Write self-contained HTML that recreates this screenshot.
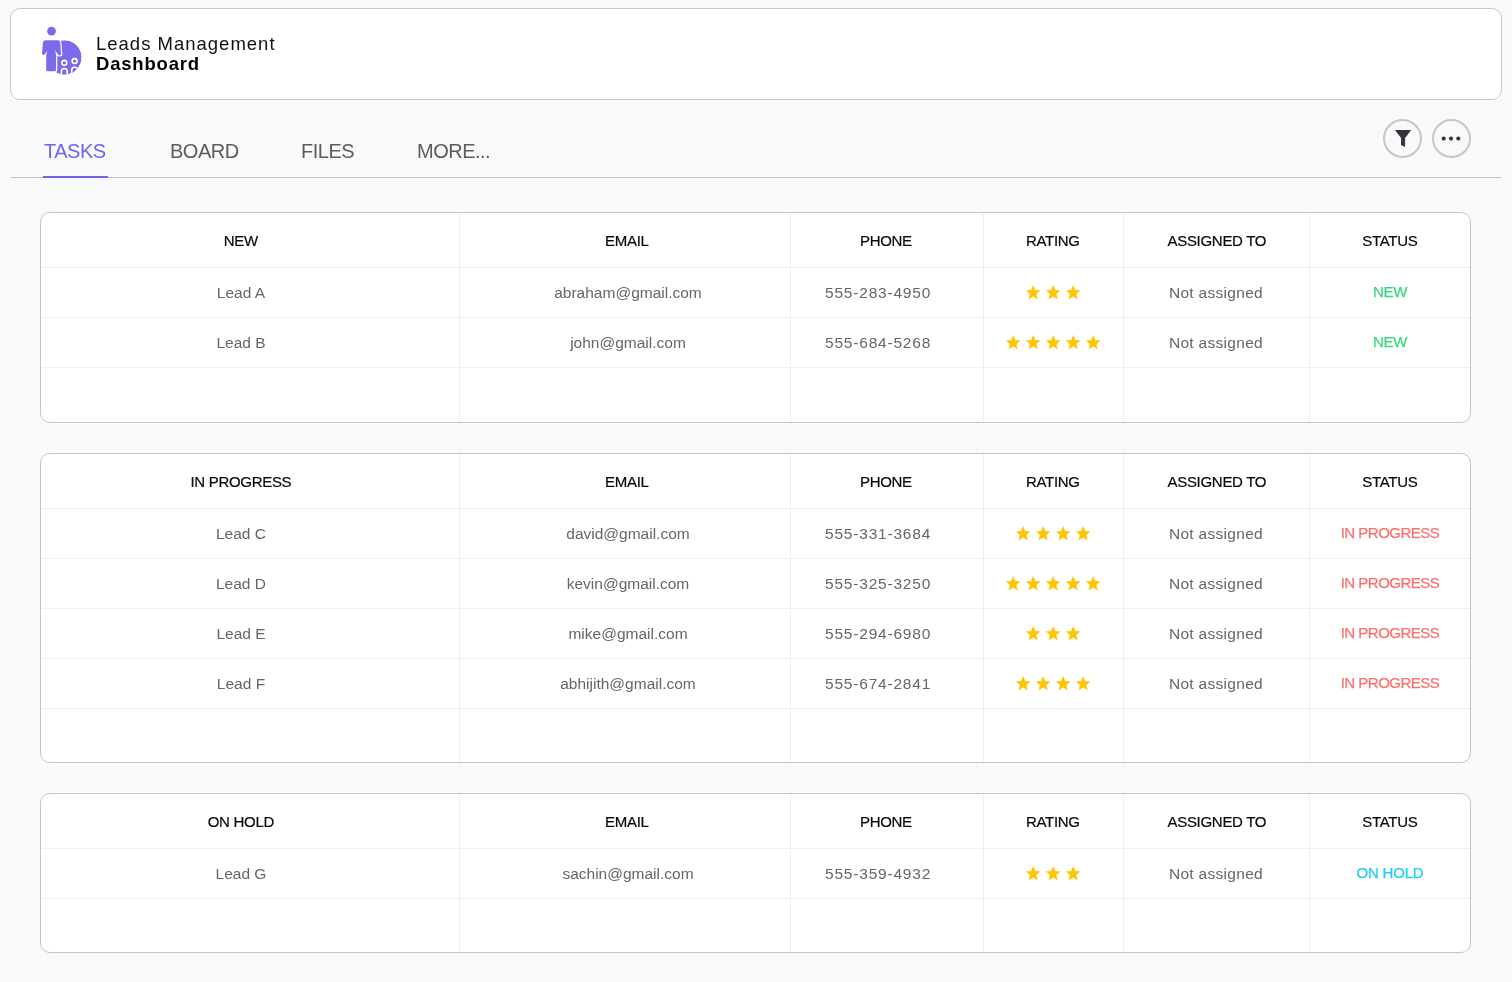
<!DOCTYPE html>
<html><head><meta charset="utf-8">
<style>
*{box-sizing:border-box;margin:0;padding:0}
html,body{width:1512px;height:982px;overflow:hidden;background:#f8f9fa;font-family:"Liberation Sans",sans-serif;position:relative}
.hdr{position:absolute;left:10px;top:8px;width:1492px;height:92px;background:#fff;border:1px solid #c9c9c9;border-radius:10px}
.logo{position:absolute;left:38px;top:24px}
.t1{position:absolute;left:96px;top:34.3px;font-size:18.5px;letter-spacing:1.0px;line-height:20px;color:#111;white-space:nowrap}
.t2{position:absolute;left:96px;top:54px;font-size:18.5px;letter-spacing:0.8px;font-weight:700;line-height:20px;color:#000;white-space:nowrap}
.tab{position:absolute;top:139px;font-size:20px;letter-spacing:-0.5px;color:#5c5c5c;line-height:24px;white-space:nowrap}
.tab.act{color:#7262ee}
.uline{position:absolute;left:43px;top:176px;width:65px;height:2px;background:#7262ee}
.gline{position:absolute;left:11px;top:177px;width:1490px;height:1px;background:#c4c4c4}
.cbtn{position:absolute;top:119px;width:39px;height:39px;border:2px solid #c6c6c6;border-radius:50%}
.ico{position:absolute;left:0;top:0}
.tbl{position:absolute;left:40px;width:1431px;background:#fff;border:1px solid #c6c6c6;border-radius:10px}
.vl{position:absolute;top:0;bottom:0;width:1px;background:#eeeeee}
.hl{position:absolute;left:0;right:0;height:1px;background:#eeeeee}
.th,.td,.tab,.t1,.t2{will-change:transform}
.th,.td{position:absolute;width:400px;text-align:center;white-space:nowrap}
.th{margin-top:0.7px;font-size:15px;letter-spacing:-0.3px;color:#080808;-webkit-text-stroke:0.2px #080808;text-indent:-0.3px}
.td{font-size:15.5px;color:#666}
.td.ph{letter-spacing:0.8px;text-align:left;width:auto}
.td.na{letter-spacing:0.3px}
.st{position:absolute;fill:#ffc400;overflow:visible}
.s{margin-top:-0.7px;margin-left:-0.8px;font-size:15px;-webkit-text-stroke:0.25px currentColor}
.s.new{color:#3bd77c;letter-spacing:-0.4px}
.s.prog{color:#f87171;letter-spacing:-0.5px}
.s.hold{color:#22d0ee;letter-spacing:-0.2px}
</style></head><body>
<div class="hdr"></div>
<svg class="logo" viewBox="38 24 48 54" width="48" height="54">
<defs><clipPath id="cc"><circle cx="64.4" cy="57.4" r="17.2"/></clipPath></defs>
<circle cx="51.5" cy="31.1" r="4.4" fill="#7b6bea"/>
<g clip-path="url(#cc)">
<circle cx="64.4" cy="57.4" r="17.2" fill="#7b6bea"/>
<circle cx="64.3" cy="62.8" r="2.45" fill="#7b6bea" stroke="#fff" stroke-width="1.6"/>
<circle cx="74.6" cy="61.1" r="2.45" fill="#7b6bea" stroke="#fff" stroke-width="1.6"/>
<path d="M61.4 78 V71.4 A2.9 2.9 0 0 1 67.2 71.4 V78" fill="#7b6bea" stroke="#fff" stroke-width="1.6"/>
<path d="M71.7 78 V70.2 A2.9 2.9 0 0 1 77.5 70.2 V78" fill="#7b6bea" stroke="#fff" stroke-width="1.6"/>
</g>
<path d="M45.6 40.2 H57.7 Q60 40.2 60.2 42.6 L61.1 54 Q61.2 55.3 60 55.3 L59 55.3 Q58.2 55.3 57.9 54.6 L55.2 50.4 L56.1 55.5 V69.8 Q56.1 71.3 54.6 71.3 H47.7 Q46.2 71.3 46.2 69.8 V55.5 L47.1 50.4 L45.1 54.1 Q44.7 54.8 43.8 54.8 H42.9 Q41.9 54.8 42 53.7 L42.9 42.6 Q43.2 40.2 45.6 40.2 Z" fill="#7b6bea" stroke="#fff" stroke-width="2.4" paint-order="stroke" stroke-linejoin="round"/>
</svg>
<div class="t1">Leads Management</div>
<div class="t2">Dashboard</div>
<div class="tab act" style="left:43.5px">TASKS</div>
<div class="tab" style="left:169.5px">BOARD</div>
<div class="tab" style="left:300.5px">FILES</div>
<div class="tab" style="left:417px">MORE...</div>
<div class="gline"></div>
<div class="uline"></div>
<div class="cbtn" style="left:1383px"></div>
<div class="cbtn" style="left:1432px"></div>
<svg class="ico" width="1512" height="180" viewBox="0 0 1512 180">
<path d="M1395 130 H1411.2 L1405.1 137.9 V146.9 L1401 144.9 V137.9 Z" fill="#36363a"/>
<circle cx="1443.7" cy="138.6" r="2.05" fill="#36363a"/>
<circle cx="1451" cy="138.6" r="2.05" fill="#36363a"/>
<circle cx="1458.3" cy="138.6" r="2.05" fill="#36363a"/>
</svg>
<div class="tbl" style="top:212px;height:211px">
<div class="vl" style="left:418px"></div>
<div class="vl" style="left:749px"></div>
<div class="vl" style="left:942px"></div>
<div class="vl" style="left:1082px"></div>
<div class="vl" style="left:1268px"></div>
<div class="hl" style="top:54px"></div>
<div class="hl" style="top:104px"></div>
<div class="hl" style="top:154px"></div>
</div>
<div class="th" style="left:40.50px;top:213px;height:54px;line-height:54px">NEW</div>
<div class="th" style="left:427.00px;top:213px;height:54px;line-height:54px">EMAIL</div>
<div class="th" style="left:686.00px;top:213px;height:54px;line-height:54px">PHONE</div>
<div class="th" style="left:852.50px;top:213px;height:54px;line-height:54px">RATING</div>
<div class="th" style="left:1016.50px;top:213px;height:54px;line-height:54px">ASSIGNED TO</div>
<div class="th" style="left:1190.00px;top:213px;height:54px;line-height:54px">STATUS</div>
<div class="td" style="left:41.00px;top:268px;height:49px;line-height:49px">Lead A</div>
<div class="td" style="left:427.50px;top:268px;height:49px;line-height:49px">abraham@gmail.com</div>
<div class="td ph" style="left:825px;top:268px;height:49px;line-height:49px">555-283-4950</div>
<svg class="st" style="left:1024.84px;top:284.02px;width:16.32px;height:17.18px" viewBox="0 0 24 24" preserveAspectRatio="none"><path d="M12 17.27L18.18 21l-1.64-7.03L22 9.24l-7.19-.61L12 2 9.19 8.63 2 9.24l5.46 4.73L5.82 21z" stroke="#ffc400" stroke-width="0.6" stroke-linejoin="round"/></svg><svg class="st" style="left:1044.84px;top:284.02px;width:16.32px;height:17.18px" viewBox="0 0 24 24" preserveAspectRatio="none"><path d="M12 17.27L18.18 21l-1.64-7.03L22 9.24l-7.19-.61L12 2 9.19 8.63 2 9.24l5.46 4.73L5.82 21z" stroke="#ffc400" stroke-width="0.6" stroke-linejoin="round"/></svg><svg class="st" style="left:1064.84px;top:284.02px;width:16.32px;height:17.18px" viewBox="0 0 24 24" preserveAspectRatio="none"><path d="M12 17.27L18.18 21l-1.64-7.03L22 9.24l-7.19-.61L12 2 9.19 8.63 2 9.24l5.46 4.73L5.82 21z" stroke="#ffc400" stroke-width="0.6" stroke-linejoin="round"/></svg>
<div class="td na" style="left:1015.70px;top:268px;height:49px;line-height:49px">Not assigned</div>
<div class="td s new" style="left:1190.40px;top:268px;height:49px;line-height:49px">NEW</div>
<div class="td" style="left:41.00px;top:318px;height:49px;line-height:49px">Lead B</div>
<div class="td" style="left:427.50px;top:318px;height:49px;line-height:49px">john@gmail.com</div>
<div class="td ph" style="left:825px;top:318px;height:49px;line-height:49px">555-684-5268</div>
<svg class="st" style="left:1004.84px;top:334.02px;width:16.32px;height:17.18px" viewBox="0 0 24 24" preserveAspectRatio="none"><path d="M12 17.27L18.18 21l-1.64-7.03L22 9.24l-7.19-.61L12 2 9.19 8.63 2 9.24l5.46 4.73L5.82 21z" stroke="#ffc400" stroke-width="0.6" stroke-linejoin="round"/></svg><svg class="st" style="left:1024.84px;top:334.02px;width:16.32px;height:17.18px" viewBox="0 0 24 24" preserveAspectRatio="none"><path d="M12 17.27L18.18 21l-1.64-7.03L22 9.24l-7.19-.61L12 2 9.19 8.63 2 9.24l5.46 4.73L5.82 21z" stroke="#ffc400" stroke-width="0.6" stroke-linejoin="round"/></svg><svg class="st" style="left:1044.84px;top:334.02px;width:16.32px;height:17.18px" viewBox="0 0 24 24" preserveAspectRatio="none"><path d="M12 17.27L18.18 21l-1.64-7.03L22 9.24l-7.19-.61L12 2 9.19 8.63 2 9.24l5.46 4.73L5.82 21z" stroke="#ffc400" stroke-width="0.6" stroke-linejoin="round"/></svg><svg class="st" style="left:1064.84px;top:334.02px;width:16.32px;height:17.18px" viewBox="0 0 24 24" preserveAspectRatio="none"><path d="M12 17.27L18.18 21l-1.64-7.03L22 9.24l-7.19-.61L12 2 9.19 8.63 2 9.24l5.46 4.73L5.82 21z" stroke="#ffc400" stroke-width="0.6" stroke-linejoin="round"/></svg><svg class="st" style="left:1084.84px;top:334.02px;width:16.32px;height:17.18px" viewBox="0 0 24 24" preserveAspectRatio="none"><path d="M12 17.27L18.18 21l-1.64-7.03L22 9.24l-7.19-.61L12 2 9.19 8.63 2 9.24l5.46 4.73L5.82 21z" stroke="#ffc400" stroke-width="0.6" stroke-linejoin="round"/></svg>
<div class="td na" style="left:1015.70px;top:318px;height:49px;line-height:49px">Not assigned</div>
<div class="td s new" style="left:1190.40px;top:318px;height:49px;line-height:49px">NEW</div>
<div class="tbl" style="top:453px;height:310px">
<div class="vl" style="left:418px"></div>
<div class="vl" style="left:749px"></div>
<div class="vl" style="left:942px"></div>
<div class="vl" style="left:1082px"></div>
<div class="vl" style="left:1268px"></div>
<div class="hl" style="top:54px"></div>
<div class="hl" style="top:104px"></div>
<div class="hl" style="top:154px"></div>
<div class="hl" style="top:204px"></div>
<div class="hl" style="top:254px"></div>
</div>
<div class="th" style="left:40.50px;top:454px;height:54px;line-height:54px">IN PROGRESS</div>
<div class="th" style="left:427.00px;top:454px;height:54px;line-height:54px">EMAIL</div>
<div class="th" style="left:686.00px;top:454px;height:54px;line-height:54px">PHONE</div>
<div class="th" style="left:852.50px;top:454px;height:54px;line-height:54px">RATING</div>
<div class="th" style="left:1016.50px;top:454px;height:54px;line-height:54px">ASSIGNED TO</div>
<div class="th" style="left:1190.00px;top:454px;height:54px;line-height:54px">STATUS</div>
<div class="td" style="left:41.00px;top:509px;height:49px;line-height:49px">Lead C</div>
<div class="td" style="left:427.50px;top:509px;height:49px;line-height:49px">david@gmail.com</div>
<div class="td ph" style="left:825px;top:509px;height:49px;line-height:49px">555-331-3684</div>
<svg class="st" style="left:1014.84px;top:525.02px;width:16.32px;height:17.18px" viewBox="0 0 24 24" preserveAspectRatio="none"><path d="M12 17.27L18.18 21l-1.64-7.03L22 9.24l-7.19-.61L12 2 9.19 8.63 2 9.24l5.46 4.73L5.82 21z" stroke="#ffc400" stroke-width="0.6" stroke-linejoin="round"/></svg><svg class="st" style="left:1034.84px;top:525.02px;width:16.32px;height:17.18px" viewBox="0 0 24 24" preserveAspectRatio="none"><path d="M12 17.27L18.18 21l-1.64-7.03L22 9.24l-7.19-.61L12 2 9.19 8.63 2 9.24l5.46 4.73L5.82 21z" stroke="#ffc400" stroke-width="0.6" stroke-linejoin="round"/></svg><svg class="st" style="left:1054.84px;top:525.02px;width:16.32px;height:17.18px" viewBox="0 0 24 24" preserveAspectRatio="none"><path d="M12 17.27L18.18 21l-1.64-7.03L22 9.24l-7.19-.61L12 2 9.19 8.63 2 9.24l5.46 4.73L5.82 21z" stroke="#ffc400" stroke-width="0.6" stroke-linejoin="round"/></svg><svg class="st" style="left:1074.84px;top:525.02px;width:16.32px;height:17.18px" viewBox="0 0 24 24" preserveAspectRatio="none"><path d="M12 17.27L18.18 21l-1.64-7.03L22 9.24l-7.19-.61L12 2 9.19 8.63 2 9.24l5.46 4.73L5.82 21z" stroke="#ffc400" stroke-width="0.6" stroke-linejoin="round"/></svg>
<div class="td na" style="left:1015.70px;top:509px;height:49px;line-height:49px">Not assigned</div>
<div class="td s prog" style="left:1190.40px;top:509px;height:49px;line-height:49px">IN PROGRESS</div>
<div class="td" style="left:41.00px;top:559px;height:49px;line-height:49px">Lead D</div>
<div class="td" style="left:427.50px;top:559px;height:49px;line-height:49px">kevin@gmail.com</div>
<div class="td ph" style="left:825px;top:559px;height:49px;line-height:49px">555-325-3250</div>
<svg class="st" style="left:1004.84px;top:575.02px;width:16.32px;height:17.18px" viewBox="0 0 24 24" preserveAspectRatio="none"><path d="M12 17.27L18.18 21l-1.64-7.03L22 9.24l-7.19-.61L12 2 9.19 8.63 2 9.24l5.46 4.73L5.82 21z" stroke="#ffc400" stroke-width="0.6" stroke-linejoin="round"/></svg><svg class="st" style="left:1024.84px;top:575.02px;width:16.32px;height:17.18px" viewBox="0 0 24 24" preserveAspectRatio="none"><path d="M12 17.27L18.18 21l-1.64-7.03L22 9.24l-7.19-.61L12 2 9.19 8.63 2 9.24l5.46 4.73L5.82 21z" stroke="#ffc400" stroke-width="0.6" stroke-linejoin="round"/></svg><svg class="st" style="left:1044.84px;top:575.02px;width:16.32px;height:17.18px" viewBox="0 0 24 24" preserveAspectRatio="none"><path d="M12 17.27L18.18 21l-1.64-7.03L22 9.24l-7.19-.61L12 2 9.19 8.63 2 9.24l5.46 4.73L5.82 21z" stroke="#ffc400" stroke-width="0.6" stroke-linejoin="round"/></svg><svg class="st" style="left:1064.84px;top:575.02px;width:16.32px;height:17.18px" viewBox="0 0 24 24" preserveAspectRatio="none"><path d="M12 17.27L18.18 21l-1.64-7.03L22 9.24l-7.19-.61L12 2 9.19 8.63 2 9.24l5.46 4.73L5.82 21z" stroke="#ffc400" stroke-width="0.6" stroke-linejoin="round"/></svg><svg class="st" style="left:1084.84px;top:575.02px;width:16.32px;height:17.18px" viewBox="0 0 24 24" preserveAspectRatio="none"><path d="M12 17.27L18.18 21l-1.64-7.03L22 9.24l-7.19-.61L12 2 9.19 8.63 2 9.24l5.46 4.73L5.82 21z" stroke="#ffc400" stroke-width="0.6" stroke-linejoin="round"/></svg>
<div class="td na" style="left:1015.70px;top:559px;height:49px;line-height:49px">Not assigned</div>
<div class="td s prog" style="left:1190.40px;top:559px;height:49px;line-height:49px">IN PROGRESS</div>
<div class="td" style="left:41.00px;top:609px;height:49px;line-height:49px">Lead E</div>
<div class="td" style="left:427.50px;top:609px;height:49px;line-height:49px">mike@gmail.com</div>
<div class="td ph" style="left:825px;top:609px;height:49px;line-height:49px">555-294-6980</div>
<svg class="st" style="left:1024.84px;top:625.02px;width:16.32px;height:17.18px" viewBox="0 0 24 24" preserveAspectRatio="none"><path d="M12 17.27L18.18 21l-1.64-7.03L22 9.24l-7.19-.61L12 2 9.19 8.63 2 9.24l5.46 4.73L5.82 21z" stroke="#ffc400" stroke-width="0.6" stroke-linejoin="round"/></svg><svg class="st" style="left:1044.84px;top:625.02px;width:16.32px;height:17.18px" viewBox="0 0 24 24" preserveAspectRatio="none"><path d="M12 17.27L18.18 21l-1.64-7.03L22 9.24l-7.19-.61L12 2 9.19 8.63 2 9.24l5.46 4.73L5.82 21z" stroke="#ffc400" stroke-width="0.6" stroke-linejoin="round"/></svg><svg class="st" style="left:1064.84px;top:625.02px;width:16.32px;height:17.18px" viewBox="0 0 24 24" preserveAspectRatio="none"><path d="M12 17.27L18.18 21l-1.64-7.03L22 9.24l-7.19-.61L12 2 9.19 8.63 2 9.24l5.46 4.73L5.82 21z" stroke="#ffc400" stroke-width="0.6" stroke-linejoin="round"/></svg>
<div class="td na" style="left:1015.70px;top:609px;height:49px;line-height:49px">Not assigned</div>
<div class="td s prog" style="left:1190.40px;top:609px;height:49px;line-height:49px">IN PROGRESS</div>
<div class="td" style="left:41.00px;top:659px;height:49px;line-height:49px">Lead F</div>
<div class="td" style="left:427.50px;top:659px;height:49px;line-height:49px">abhijith@gmail.com</div>
<div class="td ph" style="left:825px;top:659px;height:49px;line-height:49px">555-674-2841</div>
<svg class="st" style="left:1014.84px;top:675.02px;width:16.32px;height:17.18px" viewBox="0 0 24 24" preserveAspectRatio="none"><path d="M12 17.27L18.18 21l-1.64-7.03L22 9.24l-7.19-.61L12 2 9.19 8.63 2 9.24l5.46 4.73L5.82 21z" stroke="#ffc400" stroke-width="0.6" stroke-linejoin="round"/></svg><svg class="st" style="left:1034.84px;top:675.02px;width:16.32px;height:17.18px" viewBox="0 0 24 24" preserveAspectRatio="none"><path d="M12 17.27L18.18 21l-1.64-7.03L22 9.24l-7.19-.61L12 2 9.19 8.63 2 9.24l5.46 4.73L5.82 21z" stroke="#ffc400" stroke-width="0.6" stroke-linejoin="round"/></svg><svg class="st" style="left:1054.84px;top:675.02px;width:16.32px;height:17.18px" viewBox="0 0 24 24" preserveAspectRatio="none"><path d="M12 17.27L18.18 21l-1.64-7.03L22 9.24l-7.19-.61L12 2 9.19 8.63 2 9.24l5.46 4.73L5.82 21z" stroke="#ffc400" stroke-width="0.6" stroke-linejoin="round"/></svg><svg class="st" style="left:1074.84px;top:675.02px;width:16.32px;height:17.18px" viewBox="0 0 24 24" preserveAspectRatio="none"><path d="M12 17.27L18.18 21l-1.64-7.03L22 9.24l-7.19-.61L12 2 9.19 8.63 2 9.24l5.46 4.73L5.82 21z" stroke="#ffc400" stroke-width="0.6" stroke-linejoin="round"/></svg>
<div class="td na" style="left:1015.70px;top:659px;height:49px;line-height:49px">Not assigned</div>
<div class="td s prog" style="left:1190.40px;top:659px;height:49px;line-height:49px">IN PROGRESS</div>
<div class="tbl" style="top:793px;height:160px">
<div class="vl" style="left:418px"></div>
<div class="vl" style="left:749px"></div>
<div class="vl" style="left:942px"></div>
<div class="vl" style="left:1082px"></div>
<div class="vl" style="left:1268px"></div>
<div class="hl" style="top:54px"></div>
<div class="hl" style="top:104px"></div>
</div>
<div class="th" style="left:40.50px;top:794px;height:54px;line-height:54px">ON HOLD</div>
<div class="th" style="left:427.00px;top:794px;height:54px;line-height:54px">EMAIL</div>
<div class="th" style="left:686.00px;top:794px;height:54px;line-height:54px">PHONE</div>
<div class="th" style="left:852.50px;top:794px;height:54px;line-height:54px">RATING</div>
<div class="th" style="left:1016.50px;top:794px;height:54px;line-height:54px">ASSIGNED TO</div>
<div class="th" style="left:1190.00px;top:794px;height:54px;line-height:54px">STATUS</div>
<div class="td" style="left:41.00px;top:849px;height:49px;line-height:49px">Lead G</div>
<div class="td" style="left:427.50px;top:849px;height:49px;line-height:49px">sachin@gmail.com</div>
<div class="td ph" style="left:825px;top:849px;height:49px;line-height:49px">555-359-4932</div>
<svg class="st" style="left:1024.84px;top:865.02px;width:16.32px;height:17.18px" viewBox="0 0 24 24" preserveAspectRatio="none"><path d="M12 17.27L18.18 21l-1.64-7.03L22 9.24l-7.19-.61L12 2 9.19 8.63 2 9.24l5.46 4.73L5.82 21z" stroke="#ffc400" stroke-width="0.6" stroke-linejoin="round"/></svg><svg class="st" style="left:1044.84px;top:865.02px;width:16.32px;height:17.18px" viewBox="0 0 24 24" preserveAspectRatio="none"><path d="M12 17.27L18.18 21l-1.64-7.03L22 9.24l-7.19-.61L12 2 9.19 8.63 2 9.24l5.46 4.73L5.82 21z" stroke="#ffc400" stroke-width="0.6" stroke-linejoin="round"/></svg><svg class="st" style="left:1064.84px;top:865.02px;width:16.32px;height:17.18px" viewBox="0 0 24 24" preserveAspectRatio="none"><path d="M12 17.27L18.18 21l-1.64-7.03L22 9.24l-7.19-.61L12 2 9.19 8.63 2 9.24l5.46 4.73L5.82 21z" stroke="#ffc400" stroke-width="0.6" stroke-linejoin="round"/></svg>
<div class="td na" style="left:1015.70px;top:849px;height:49px;line-height:49px">Not assigned</div>
<div class="td s hold" style="left:1190.40px;top:849px;height:49px;line-height:49px">ON HOLD</div>
</body></html>
